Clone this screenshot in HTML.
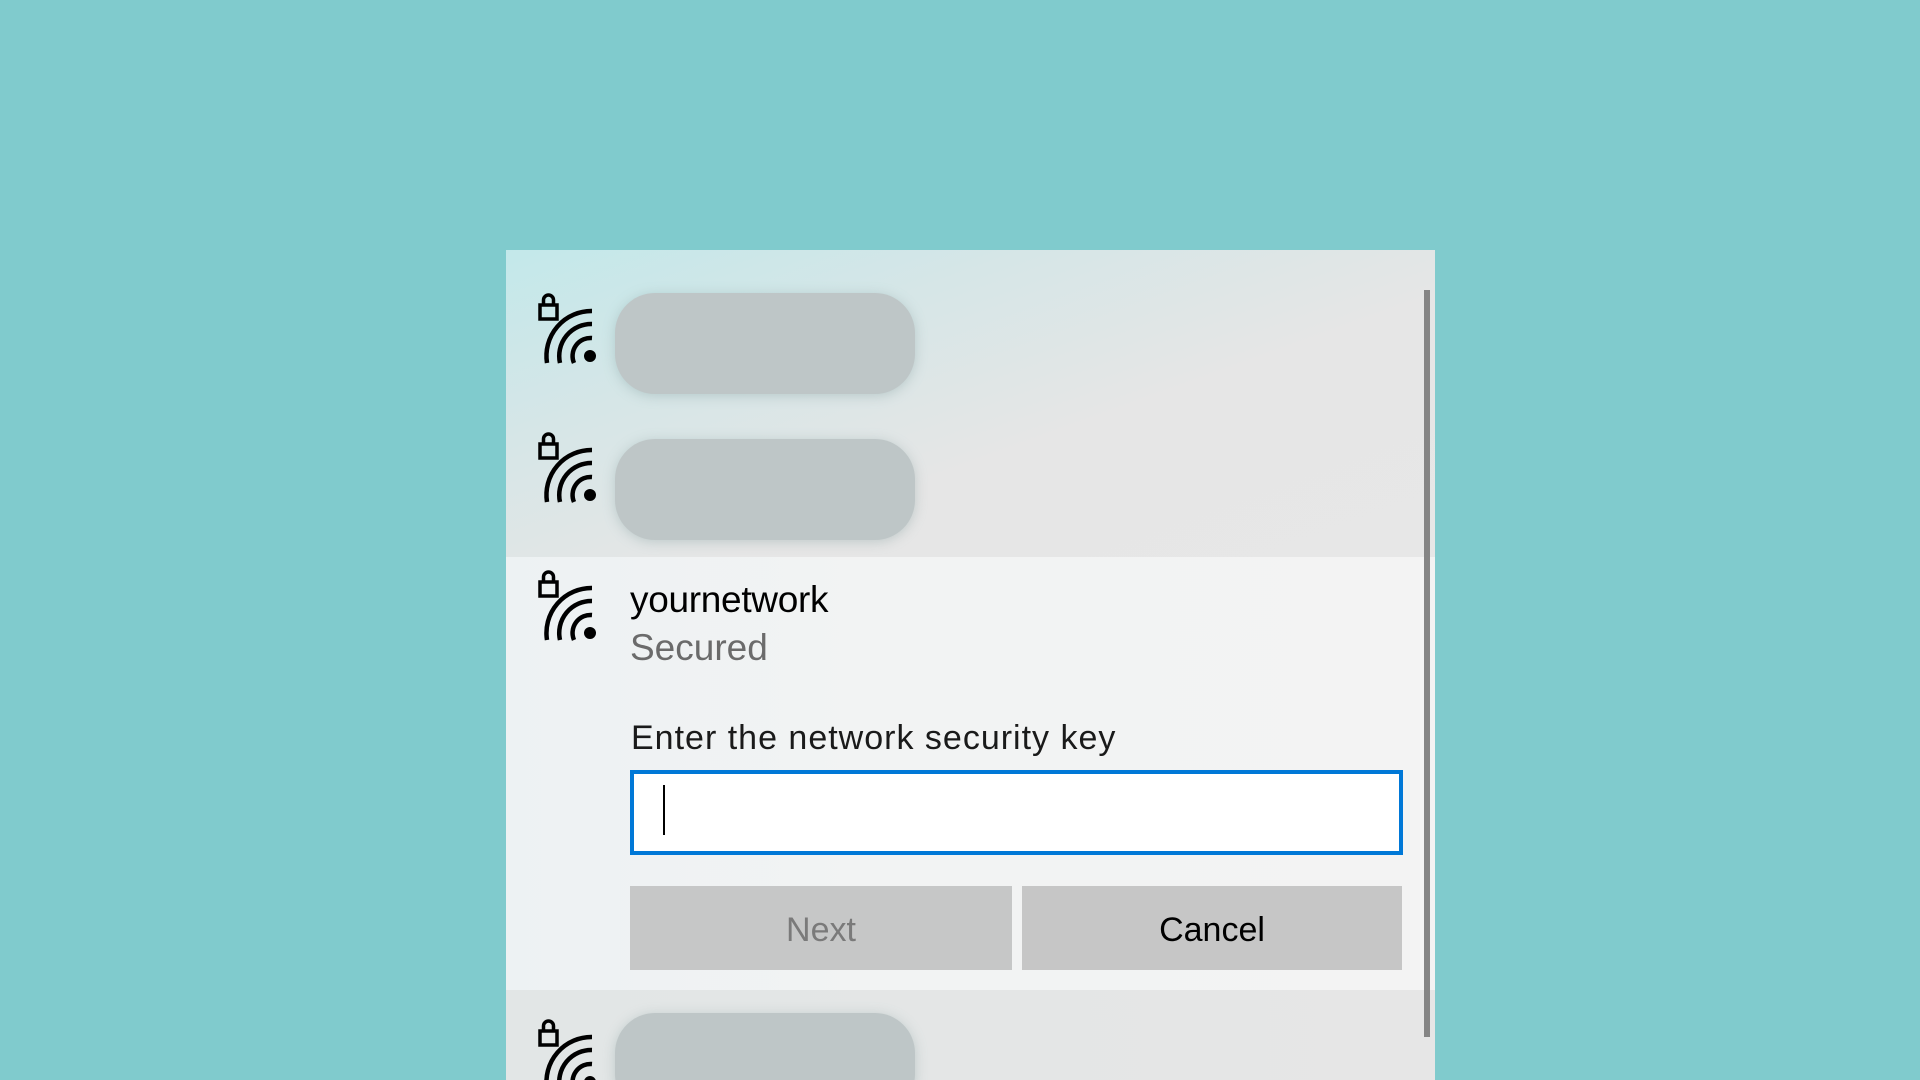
<!DOCTYPE html>
<html><head><meta charset="utf-8"><style>
html,body{margin:0;padding:0}
body{width:1920px;height:1080px;background:#80cbcd;position:relative;overflow:hidden;font-family:"Liberation Sans",sans-serif}
.panel{position:absolute;left:506px;top:250px;width:929px;height:830px;overflow:hidden;background:#e6e6e6}
.top{position:absolute;left:0;top:0;width:929px;height:307px;background:linear-gradient(160deg,#c3e8ea 0%,#d6e6e7 30%,#e6e6e6 60%,#e7e7e7 100%)}
.mid{position:absolute;left:0;top:307px;width:929px;height:433px;background:linear-gradient(90deg,#edf2f3 0%,#f2f3f3 40%,#f3f3f3 100%)}
.bot{position:absolute;left:0;top:740px;width:929px;height:90px;background:linear-gradient(90deg,#e2e6e6,#e6e6e6)}
.pill{position:absolute;left:109px;width:300px;height:101px;border-radius:40px;background:#bec6c7;box-shadow:0 2px 12px rgba(120,150,150,.35)}
.ico{position:absolute;left:31px;width:64px;height:72px}
.t{position:absolute;white-space:nowrap}
.sb{position:absolute;left:918px;top:40px;width:6px;height:747px;background:#858585}
</style></head><body>
<div class="panel">
<div class="top"></div><div class="mid"></div><div class="bot"></div>
<div class="pill" style="top:43px"></div>
<div class="pill" style="top:189px"></div>
<div class="pill" style="top:763px"></div>
<svg class="ico" style="top:43px" viewBox="0 0 64 72"><g fill="none" stroke="#000" stroke-width="4.5"><rect x="3" y="12" width="17" height="14" stroke-width="3.5"/><path d="M6.5 12V7a5 5 0 0 1 10 0v5" stroke-width="3.5"/><path d="M10 70A45 45 0 0 1 55 18"/><path d="M23 70A32 32 0 0 1 55 31"/><path d="M37 70A18 18 0 0 1 55 45"/></g><circle cx="53" cy="63" r="6"/></svg>
<svg class="ico" style="top:182px" viewBox="0 0 64 72"><g fill="none" stroke="#000" stroke-width="4.5"><rect x="3" y="12" width="17" height="14" stroke-width="3.5"/><path d="M6.5 12V7a5 5 0 0 1 10 0v5" stroke-width="3.5"/><path d="M10 70A45 45 0 0 1 55 18"/><path d="M23 70A32 32 0 0 1 55 31"/><path d="M37 70A18 18 0 0 1 55 45"/></g><circle cx="53" cy="63" r="6"/></svg>
<svg class="ico" style="top:320px" viewBox="0 0 64 72"><g fill="none" stroke="#000" stroke-width="4.5"><rect x="3" y="12" width="17" height="14" stroke-width="3.5"/><path d="M6.5 12V7a5 5 0 0 1 10 0v5" stroke-width="3.5"/><path d="M10 70A45 45 0 0 1 55 18"/><path d="M23 70A32 32 0 0 1 55 31"/><path d="M37 70A18 18 0 0 1 55 45"/></g><circle cx="53" cy="63" r="6"/></svg>
<svg class="ico" style="top:769px" viewBox="0 0 64 72"><g fill="none" stroke="#000" stroke-width="4.5"><rect x="3" y="12" width="17" height="14" stroke-width="3.5"/><path d="M6.5 12V7a5 5 0 0 1 10 0v5" stroke-width="3.5"/><path d="M10 70A45 45 0 0 1 55 18"/><path d="M23 70A32 32 0 0 1 55 31"/><path d="M37 70A18 18 0 0 1 55 45"/></g><circle cx="53" cy="63" r="6"/></svg>
<div class="t" style="left:124px;top:329px;font-size:37px;color:#000;letter-spacing:-0.3px">yournetwork</div>
<div class="t" style="left:124px;top:377px;font-size:37px;color:#6b6b6b">Secured</div>
<div class="t" style="left:125px;top:469px;font-size:34px;color:#1a1a1a;letter-spacing:1px">Enter the network security key</div>
<div style="position:absolute;left:124px;top:520px;width:765px;height:77px;border:4px solid #0078d7;background:#fff"></div>
<div style="position:absolute;left:157px;top:535px;width:2px;height:50px;background:#000"></div>
<div style="position:absolute;left:124px;top:636px;width:382px;height:84px;background:#c6c7c7;color:#7a7a7a;font-size:34px;line-height:88px;text-align:center">Next</div>
<div style="position:absolute;left:516px;top:636px;width:380px;height:84px;background:#c6c6c6;color:#000;font-size:34px;line-height:88px;text-align:center">Cancel</div>
<div class="sb"></div>
</div>
</body></html>
